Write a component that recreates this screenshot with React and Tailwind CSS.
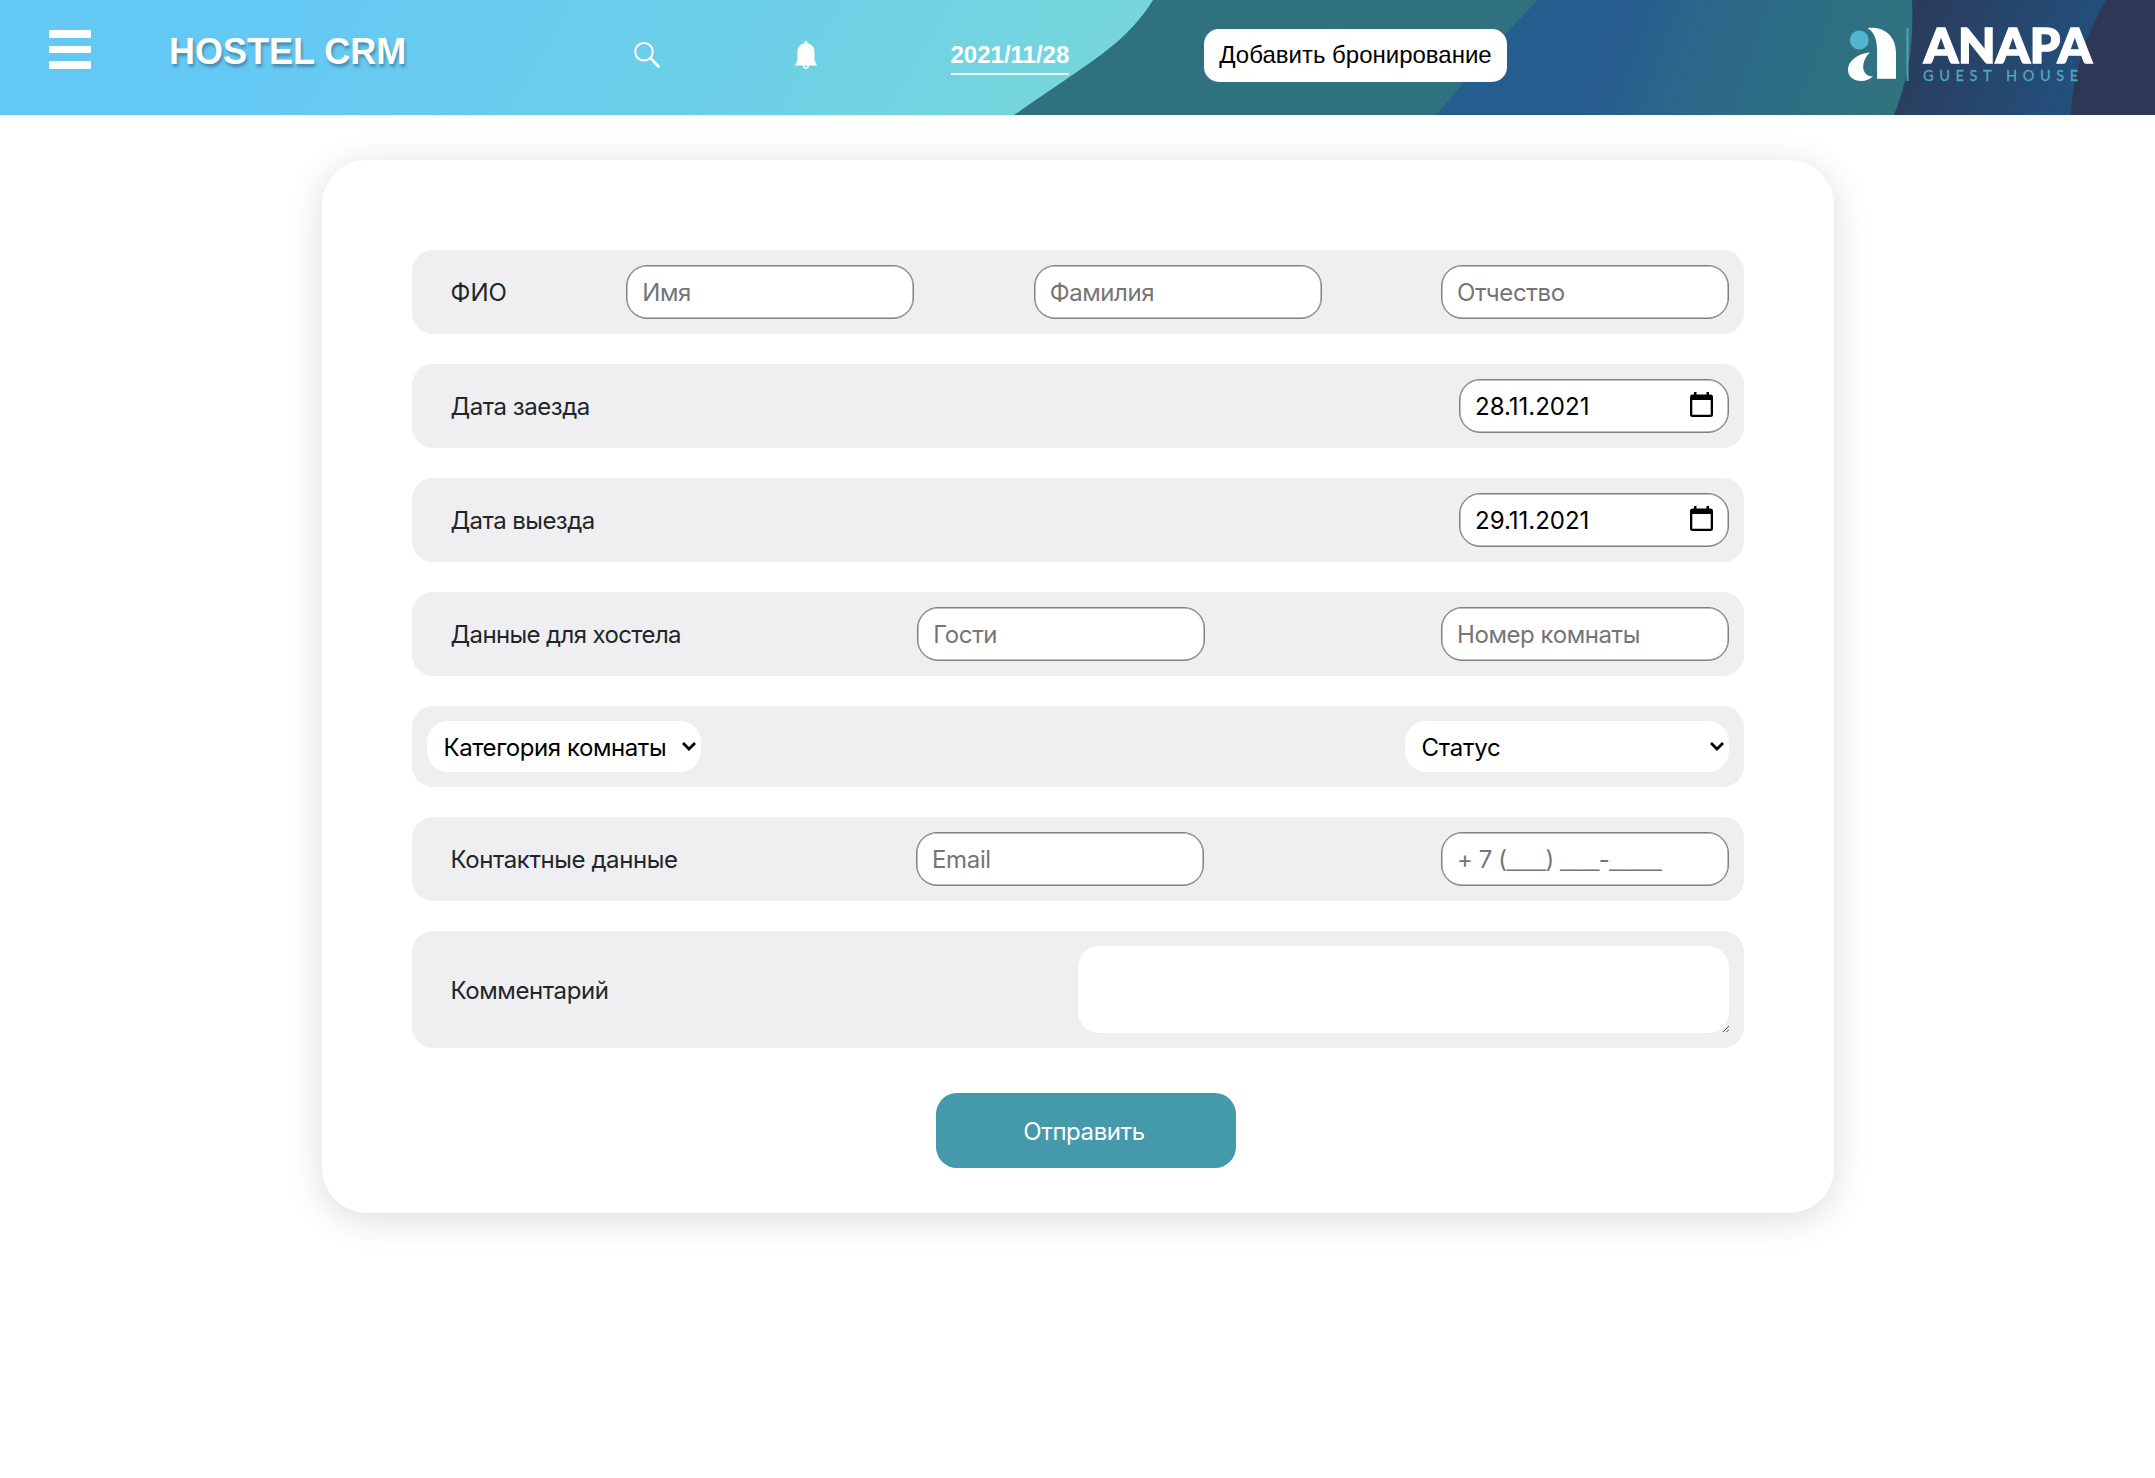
const UI = "font-['Inter','Liberation_Sans',sans-serif]";

function HeaderBackground() {
  return (
    <svg className="absolute inset-0 h-full w-full" viewBox="0 0 2155 115" preserveAspectRatio="none" aria-hidden="true">
      <defs>
        <linearGradient id="sky" gradientUnits="userSpaceOnUse" x1="270" y1="0" x2="1010" y2="430">
          <stop offset="0" stopColor="#64c8f5" />
          <stop offset="0.5" stopColor="#6ccfe8" />
          <stop offset="1" stopColor="#7ad8d8" />
        </linearGradient>
        <linearGradient id="sea" gradientUnits="userSpaceOnUse" x1="1610" y1="40" x2="1870" y2="130">
          <stop offset="0" stopColor="#265d8f" />
          <stop offset="0.3" stopColor="#2b678a" />
          <stop offset="1" stopColor="#30737f" />
        </linearGradient>
        <linearGradient id="deep" gradientUnits="userSpaceOnUse" x1="1915" y1="20" x2="2070" y2="90">
          <stop offset="0" stopColor="#2a3c5d" />
          <stop offset="1" stopColor="#234f7b" />
        </linearGradient>
      </defs>
      <rect width="2155" height="115" fill="url(#sky)" />
      <path d="M1153 0C1142 18 1130 30 1117 42C1096 60 1062 82 1014 115H2155V0Z" fill="#30717f" />
      <path d="M1538 0C1518 20 1498 42 1482 60C1467 78 1452 96 1436 115H2155V0Z" fill="url(#sea)" />
      <path d="M1912 0C1914 45 1908 80 1894 115H2155V0Z" fill="url(#deep)" />
      <path d="M2106 0C2086 36 2073 70 2071 115H2155V0Z" fill="#2c3855" />
    </svg>
  );
}

function Logo() {
  return (
    <svg className="h-[60px] w-[260px] shrink-0 overflow-visible" viewBox="1840 22 260 60" aria-label="ANAPA Guest House">
      <circle cx="1859.300" cy="40" r="9.400" fill="#52b5cd" />
      <path d="M1867.500 28C1885 26 1896 37 1896 53V78.700H1877V50C1877 39 1874 32 1867.500 28Z" fill="#fff" />
      <path d="M1870 52.300C1856 54 1848 62 1848 69.500C1848 77 1854 81 1861 81C1866 81 1870 79 1873 76.500C1860 76 1861 61 1870 52.300Z" fill="#fff" />
      <rect x="1906.500" y="28" width="2" height="53" fill="#4aa3b8" />
      <text x="1924" y="62.500" textLength="168" lengthAdjust="spacingAndGlyphs" className="fill-white stroke-white font-['Lato',sans-serif] text-[47.500px] font-black" strokeWidth="1.600">ANAPA</text>
      <text x="1923" y="80.500" textLength="155" className="fill-[#4fa9be] stroke-[#4fa9be] font-['Lato',sans-serif] text-[14.500px]" strokeWidth="0.3">GUEST HOUSE</text>
    </svg>
  );
}

function Header() {
  return (
    <header className="relative h-[115px] w-full">
      <HeaderBackground />
      <div className="relative flex h-full items-start">
        <div className="ml-[49px] mt-[30px] flex w-[42px] shrink-0 flex-col gap-2">
          <span className="h-[7.500px] rounded-[1px] bg-white" />
          <span className="h-[7.500px] rounded-[1px] bg-white" />
          <span className="h-[7.500px] rounded-[1px] bg-white" />
        </div>
        <h1 className="ml-[78px] mt-[31px] w-[240px] shrink-0 whitespace-nowrap font-['Liberation_Sans',sans-serif] text-[36px] font-bold leading-[41px] text-white [text-shadow:1.500px_3px_3px_rgba(0,0,0,0.3)]">HOSTEL CRM</h1>
        <svg className="ml-[225px] mt-[41px] h-7 w-7 shrink-0" viewBox="0 0 28 28" fill="none" stroke="#fff">
          <ellipse cx="10" cy="10.700" rx="8.800" ry="8.800" strokeWidth="2" />
          <path d="M16.500 17.300L24.500 25.500" strokeWidth="2.800" strokeLinecap="round" />
        </svg>
        <svg className="ml-[133px] mt-[41px] h-7 w-[22px] shrink-0" viewBox="0 0 22 28">
          <path d="M11 0C12 0 12.500 .8 12.500 2.200C17.500 3.200 19.500 7 19.500 11.500V19L21.800 24.400H.2L2.500 19V11.500C2.500 7 4.500 3.200 9.500 2.200C9.500 .8 10 0 11 0Z" fill="#fff" />
          <path d="M9 24V25.200A2 2 0 0 0 13 25.200V24" fill="none" stroke="#fff" strokeWidth="1.500" />
        </svg>
        <a className="ml-[133.500px] mt-[41px] w-[118.500px] shrink-0 whitespace-nowrap border-b-2 border-white/90 pb-[5px] font-['Liberation_Sans',sans-serif] text-[24px] font-bold leading-[27px] text-white">2021/11/28</a>
        <button className="ml-[135px] mt-[29px] h-[53px] w-[303px] shrink-0 whitespace-nowrap rounded-[15px] bg-white pb-px font-['Liberation_Sans',sans-serif] text-[24px] text-black">Добавить бронирование</button>
        <div className="ml-[332.500px] mt-[22px]">
          <Logo />
        </div>
      </div>
    </header>
  );
}

function Row({ className = "h-[84px]", children }) {
  return <div className={`flex items-center justify-between rounded-[21px] bg-[#efeff1] px-[15px] ${className}`}>{children}</div>;
}

function Label({ className, children }) {
  return <label className={`shrink-0 whitespace-nowrap pl-[23.500px] pt-[2px] text-[24px] leading-9 text-[#212529] ${className}`}>{children}</label>;
}

const FIELD_BOX = "h-[54px] shrink-0 rounded-[21px] border border-[#808080] bg-white shadow-[inset_0_0_0_0.5px_#808080] text-[24px]";

function Field({ placeholder, className = "" }) {
  return (
    <input
      className={`${FIELD_BOX} w-[288px] px-[15px] text-black outline-none placeholder:text-[#757575] ${className}`}
      placeholder={placeholder}
    />
  );
}

function Blank({ children }) {
  return <span className="align-[2px] font-['Liberation_Sans',sans-serif] leading-none tracking-[-0.45px]">{children}</span>;
}

function PhoneField() {
  return (
    <div className={`${FIELD_BOX} flex w-[288px] items-center whitespace-pre px-[15px] pt-px tracking-[-0.4px] text-[#757575]`}>
      <span>
        + 7 (<Blank>___</Blank>) <Blank>___</Blank>-<Blank>____</Blank>
      </span>
    </div>
  );
}

function DateField({ value }) {
  return (
    <div className={`${FIELD_BOX} flex w-[270px] items-center justify-between pl-[15px] pr-[15px] text-black`}>
      <span className="pt-[2px]">{value}</span>
      <svg className="mb-[4px] h-[25px] w-[23px]" viewBox="0 0 23 25">
        <path fillRule="evenodd" d="M4 0H6.500V2.500H16.500V0H19V2.500H20.500A2.500 2.500 0 0 1 23 5V22.500A2.500 2.500 0 0 1 20.500 25H2.500A2.500 2.500 0 0 1 0 22.500V5A2.500 2.500 0 0 1 2.500 2.500H4ZM2.300 8V22.700H20.700V8Z" />
      </svg>
    </div>
  );
}

function Select({ className, textClass, children }) {
  return (
    <button className={`flex h-[51px] items-center justify-between rounded-[21px] bg-white pl-[16.500px] pr-[5px] text-[24px] text-black ${className}`}>
      <span className={`whitespace-nowrap pt-[3px] ${textClass}`}>{children}</span>
      <svg className="h-[9px] w-[14px]" viewBox="0 0 14 9" fill="none" stroke="#000" strokeWidth="2.800">
        <path d="M1 1L7 7L13 1" />
      </svg>
    </button>
  );
}

export default function App() {
  return (
    <div className={`min-h-[1478px] w-full bg-white ${UI}`}>
      <Header />
      <main className="ml-[322px] mt-[45px] flex h-[1053px] w-[1512px] flex-col gap-[30px] rounded-[45px] bg-white px-[90px] pt-[90px] shadow-[0_6px_36px_rgba(0,0,0,0.14)]">
        <Row>
          <Label className="w-[80px]">ФИО</Label>
          <Field placeholder="Имя" className="tracking-[-0.4px]" />
          <Field placeholder="Фамилия" className="tracking-[-0.4px]" />
          <Field placeholder="Отчество" className="tracking-[-0.35px]" />
        </Row>
        <Row>
          <Label className="tracking-[-0.45px]">Дата заезда</Label>
          <DateField value="28.11.2021" />
        </Row>
        <Row>
          <Label className="tracking-[-0.55px]">Дата выезда</Label>
          <DateField value="29.11.2021" />
        </Row>
        <Row>
          <Label className="w-[254.500px] tracking-[-0.62px]">Данные для хостела</Label>
          <Field placeholder="Гости" className="tracking-[-0.4px]" />
          <Field placeholder="Номер комнаты" className="tracking-[-0.42px]" />
        </Row>
        <Row className="h-[81px]">
          <Select className="w-[274px]" textClass="tracking-[-0.43px]">Категория комнаты</Select>
          <Select className="w-[324px]" textClass="tracking-[-0.25px]">Статус</Select>
        </Row>
        <Row>
          <Label className="w-[252px] tracking-[-0.42px]">Контактные данные</Label>
          <Field placeholder="Email" className="tracking-[-0.35px]" />
          <PhoneField />
        </Row>
        <Row className="h-[117px]">
          <Label className="tracking-[-0.4px]">Комментарий</Label>
          <div className="flex h-[87px] w-[651px] items-end justify-end rounded-[21px] bg-white">
            <svg className="mb-px h-[6px] w-[6px]" viewBox="0 0 6 6" stroke="#444" strokeWidth="1">
              <path d="M0 6L6 0M3.500 6L6 3.500" />
            </svg>
          </div>
        </Row>
        <button className="ml-[523.500px] mt-[15px] h-[75px] w-[300px] shrink-0 rounded-[21px] bg-[#4499ab] pr-[3px] pt-[2px] text-[24px] tracking-[-0.42px] text-white">Отправить</button>
      </main>
    </div>
  );
}
